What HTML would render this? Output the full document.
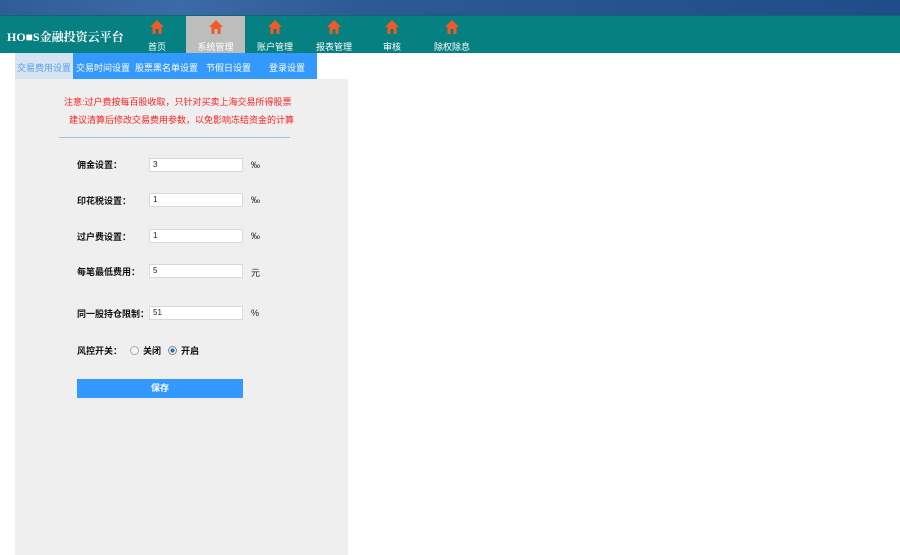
<!DOCTYPE html>
<html><head><meta charset="utf-8"><style>
*{margin:0;padding:0;box-sizing:border-box}
body{width:900px;height:555px;background:#fff;position:relative;overflow:hidden;font-family:"Liberation Sans","Noto Sans CJK SC",sans-serif;font-size:9px}
.top{position:absolute;left:0;top:0;width:900px;height:15px;background:linear-gradient(90deg,#2f5d98,#3b6aa8 20%,#2d5a94 40%,#1f4c8a 100%)}
.hdr{position:absolute;left:0;top:15px;width:900px;height:38px;background:#068080;border-top:1px solid #0a6a6a}
.logo{position:absolute;left:7px;top:12px;color:#fff;font-size:12px;font-weight:bold;font-family:"Liberation Serif","Noto Serif CJK SC",serif}
.nav{position:absolute;top:0;height:38px;color:#fff;font-size:9px;text-align:center}
.nav.a{background:#bdbdbd}
.nav span{position:absolute;bottom:1px;left:0;right:0}
.nav svg{position:absolute;top:3px;left:50%;margin-left:-8px}
.sub{position:absolute;left:15px;top:53px;width:302px;height:26px;background:#3399ff}
.sub div{position:absolute;top:8px;color:#fff;font-size:9px}
.panel{position:absolute;left:15px;top:79px;width:333px;height:476px;background:#efefef}
.red{position:absolute;color:#ff2020;font-size:9px}
.line{position:absolute;left:59px;top:137px;width:231px;height:1px;background:#99c4ee}
.lbl{position:absolute;left:77px;font-weight:bold;font-size:9px;color:#111}
.inp{position:absolute;left:149px;width:94px;height:14px;background:#fff;border:1px solid #d8d8d8;font-size:8px;padding:1px 3px;color:#222}
.u{position:absolute;left:251px;font-size:9px;color:#222}
.btn{position:absolute;left:77px;top:379px;width:166px;height:19px;background:#3399ff;color:#fff;font-weight:bold;text-align:center;line-height:19px;font-size:9px}
</style></head><body>
<div class="top"></div>
<div class="hdr">
<div class="logo">HO■S金融投资云平台</div>
<div class="nav" style="left:136px;width:42px"><svg width="16" height="16" viewBox="0 0 16 16"><path d="M8 1L1 8h2.5v7h9V8H15z" fill="#f05a28"/><rect x="6.5" y="10" width="3" height="5" fill="#068080"/></svg><span>首页</span></div>
<div class="nav a" style="left:186px;width:59px"><svg width="16" height="16" viewBox="0 0 16 16"><path d="M8 1L1 8h2.5v7h9V8H15z" fill="#f05a28"/><rect x="6.5" y="10" width="3" height="5" fill="#bdbdbd"/></svg><span>系统管理</span></div>
<div class="nav" style="left:250px;width:50px"><svg width="16" height="16" viewBox="0 0 16 16"><path d="M8 1L1 8h2.5v7h9V8H15z" fill="#f05a28"/><rect x="6.5" y="10" width="3" height="5" fill="#068080"/></svg><span>账户管理</span></div>
<div class="nav" style="left:309px;width:50px"><svg width="16" height="16" viewBox="0 0 16 16"><path d="M8 1L1 8h2.5v7h9V8H15z" fill="#f05a28"/><rect x="6.5" y="10" width="3" height="5" fill="#068080"/></svg><span>报表管理</span></div>
<div class="nav" style="left:372px;width:40px"><svg width="16" height="16" viewBox="0 0 16 16"><path d="M8 1L1 8h2.5v7h9V8H15z" fill="#f05a28"/><rect x="6.5" y="10" width="3" height="5" fill="#068080"/></svg><span>审核</span></div>
<div class="nav" style="left:427px;width:50px"><svg width="16" height="16" viewBox="0 0 16 16"><path d="M8 1L1 8h2.5v7h9V8H15z" fill="#f05a28"/><rect x="6.5" y="10" width="3" height="5" fill="#068080"/></svg><span>除权除息</span></div>
</div>
<div class="sub">
<div style="left:0;top:0;width:58px;height:26px;background:#d6e3f1;color:#5aa0e8;padding-top:8px;text-align:center">交易费用设置</div>
<div style="left:61px">交易时间设置</div>
<div style="left:120px">股票黑名单设置</div>
<div style="left:191px">节假日设置</div>
<div style="left:254px">登录设置</div>
</div>
<div class="panel"></div>
<div class="red" style="left:64px;top:95px">注意:过户费按每百股收取，只针对买卖上海交易所得股票</div>
<div class="red" style="left:69px;top:113px">建议清算后修改交易费用参数，以免影响冻结资金的计算</div>
<div class="line"></div>
<div class="lbl" style="top:158px">佣金设置：</div><div class="inp" style="top:158px">3</div><div class="u" style="top:160px">‰</div>
<div class="lbl" style="top:194px">印花税设置：</div><div class="inp" style="top:193px">1</div><div class="u" style="top:195px">‰</div>
<div class="lbl" style="top:230px">过户费设置：</div><div class="inp" style="top:229px">1</div><div class="u" style="top:231px">‰</div>
<div class="lbl" style="top:265px">每笔最低费用：</div><div class="inp" style="top:264px">5</div><div class="u" style="top:266px">元</div>
<div class="lbl" style="top:307px">同一股持仓限制：</div><div class="inp" style="top:306px;left:149px">51</div><div class="u" style="top:308px">%</div>
<div class="lbl" style="top:344px">风控开关：</div>
<svg style="position:absolute;left:130px;top:346px" width="9" height="9"><circle cx="4.5" cy="4.5" r="4" fill="#f4f4f4" stroke="#aaa"/></svg>
<div class="lbl" style="left:143px;top:344px">关闭</div>
<svg style="position:absolute;left:168px;top:346px" width="9" height="9"><circle cx="4.5" cy="4.5" r="4" fill="#eee" stroke="#888"/><circle cx="4.5" cy="4.5" r="2" fill="#1e6fb8"/></svg>
<div class="lbl" style="left:181px;top:344px">开启</div>
<div class="btn">保存</div>
</body></html>
